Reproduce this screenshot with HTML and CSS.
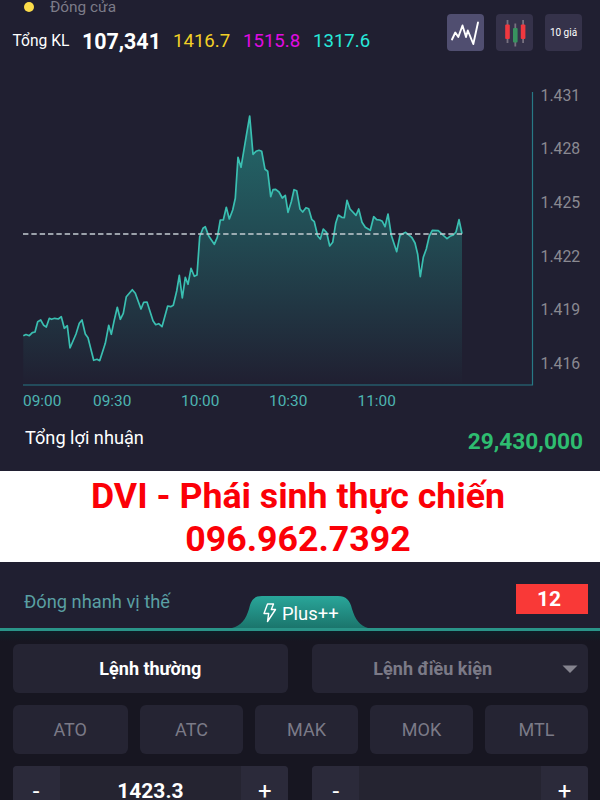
FILE: index.html
```
<!DOCTYPE html>
<html lang="vi">
<head>
  <meta charset="UTF-8" />
  <title>Phái sinh</title>
  <link rel="stylesheet" href="styles.css">
</head>
<body>

<header>
  <div class="market">
    <div class="status"><span class="dot"></span>Đóng cửa</div>
    <div class="stats">
      <span class="label">Tổng KL</span>
      <span class="volume">107,341</span>
      <span class="ref">1416.7</span>
      <span class="ceil">1515.8</span>
      <span class="floor">1317.6</span>
    </div>
  </div>
  <div class="tools">
    <button class="tool active" aria-label="Line chart">
      <svg width="37" height="37" viewBox="0 0 37 37">
        <path d="M5 25.500L8.300 18.500L11.300 23L15.500 11.500L19 23L20.800 16.500L26.300 30L31 8.500" fill="none" stroke="#fff" stroke-width="1.900" stroke-linejoin="round" stroke-linecap="round"/>
      </svg>
    </button>
    <button class="tool" aria-label="Candle chart">
      <svg width="37" height="37" viewBox="0 0 37 37">
        <path d="M11.500 6V29M19.300 9.500V32.500M27.100 6V29" stroke="#77717f" stroke-width="1.800"/>
        <rect x="9.200" y="10.500" width="4.600" height="14.500" rx="1" fill="#f0383f"/>
        <rect x="17" y="14" width="4.600" height="14.500" rx="1" fill="#38935f"/>
        <rect x="24.800" y="10.500" width="4.600" height="14.500" rx="1" fill="#f0383f"/>
      </svg>
    </button>
    <button class="tool">10 giá</button>
  </div>
</header>

<svg class="chart" width="600" height="340" viewBox="0 80 600 340">
  <defs>
    <linearGradient id="area" gradientUnits="userSpaceOnUse" x1="0" y1="116" x2="0" y2="385">
      <stop offset="0" stop-color="#26a69a" stop-opacity="0.55"/>
      <stop offset="0.45" stop-color="#26a69a" stop-opacity="0.32"/>
      <stop offset="1" stop-color="#26a69a" stop-opacity="0"/>
    </linearGradient>
  </defs>
  <path id="areaPath" fill="url(#area)"/>
  <path d="M23 385H532.500V92" fill="none" stroke="#277985" stroke-width="1.200"/>
  <path id="linePath" fill="none" stroke="#3abfb1" stroke-width="1.700" stroke-linejoin="round"/>
  <path d="M23 234H462" stroke="#c3cdd2" stroke-width="1.300" stroke-dasharray="5.400 2.940"/>
  <g class="price">
    <text x="540.500" y="101">1.431</text>
    <text x="540.500" y="154">1.428</text>
    <text x="540.500" y="208">1.425</text>
    <text x="540.500" y="262">1.422</text>
    <text x="540.500" y="315">1.419</text>
    <text x="540.500" y="369">1.416</text>
  </g>
  <g class="time">
    <text x="23" y="406">09:00</text>
    <text x="93" y="406">09:30</text>
    <text x="181" y="406">10:00</text>
    <text x="269" y="406">10:30</text>
    <text x="357.500" y="406">11:00</text>
  </g>
</svg>

<div class="profit">
  <span>Tổng lợi nhuận</span>
  <strong>29,430,000</strong>
</div>

<div class="banner">
  <p>DVI - Phái sinh thực chiến</p>
  <p>096.962.7392</p>
</div>

<div class="quick">
  <span>Đóng nhanh vị thế</span>
  <span class="count">12</span>
  <div class="plus">
    <svg width="136" height="33" viewBox="0 0 136 33">
      <defs>
        <linearGradient id="tab" x1="0" y1="0" x2="0" y2="1">
          <stop offset="0" stop-color="#29a69a"/>
          <stop offset="1" stop-color="#1b756c"/>
        </linearGradient>
      </defs>
      <path d="M0 33C9 31 14 24 17 14C19 5 22 1 30 1H106C114 1 118 5 120 14C123 24 128 31 136 33Z" fill="url(#tab)"/>
      <path d="M35.500 9H41.500L39.300 14.500H43.500L35.500 26.500L36.700 18.500H32Z" fill="none" stroke="#fff" stroke-width="1.400" stroke-linejoin="round"/>
    </svg>
    <span>Plus++</span>
  </div>
</div>

<main class="order">
  <div class="types">
    <button class="box selected">Lệnh thường</button>
    <button class="box conditional">Lệnh điều kiện
      <svg width="16" height="8" viewBox="0 0 16 8"><path d="M0.500 0.500H15.500L8 8Z" fill="#85848f"/></svg>
    </button>
  </div>
  <div class="kinds">
    <button class="box">ATO</button>
    <button class="box">ATC</button>
    <button class="box">MAK</button>
    <button class="box">MOK</button>
    <button class="box">MTL</button>
  </div>
  <div class="steppers">
    <div class="stepper"><button>-</button><span>1423.3</span><button>+</button></div>
    <div class="stepper"><button>-</button><span></span><button>+</button></div>
  </div>
</main>

<script>
  const points = [
    [23.3,335.7],[26,334.5],[29.3,335.7],[32.3,332.6],[35,332],[37.7,321.7],[40.7,320],[43.7,325.3],
    [46.3,327],[49.3,318.3],[51.5,319.3],[54.7,318.3],[58.3,319],[61.3,316.7],[64.3,328.3],[67.3,325.7],
    [70,348],[76,334],[79.3,323.3],[82,320],[85.3,334],[88,337.7],[93.7,360.3],[97,359.3],
    [99.7,360.7],[105.3,343.3],[108.7,325.3],[111.3,334.3],[114.3,320],[117.3,307.3],[120.3,319.3],[123.3,313.3],
    [126.3,296.7],[132.3,289.7],[135.3,293.3],[141,309],[143.7,302.3],[147,302],[153,320.7],[155.7,324.7],
    [158.7,323.7],[162,326.7],[167.7,306],[170.7,306.7],[173.3,305.3],[176.7,291],[179.3,275.3],[182.3,298],
    [185.3,277.3],[188,284.3],[191,268.3],[194.3,276.3],[197,275],[199.7,236.7],[200.7,234],[203,228.3],
    [205.3,226.7],[208.7,236],[214.3,244.3],[217.3,237.3],[220.3,220],[223.3,220],[226.3,207.3],[229.3,219],
    [232.7,210],[235.3,198.3],[238,157.3],[241,167.3],[246.7,133.3],[249.7,116],[253,154.3],[256,151.3],
    [259,150.3],[261.7,151.3],[265,169.3],[267.7,171.3],[270.7,196.7],[273,189.7],[275.7,189.3],[279,192],
    [282.3,198],[285.3,195.3],[288,212.3],[291.3,201.7],[294,189.7],[296.7,190.7],[300,209],[302.7,212],
    [306,207.7],[308.7,208.7],[311.7,219.3],[314.3,221.7],[317.7,236],[320.3,239],[323.3,229],[326.7,232.7],
    [329.7,246],[332.7,242.3],[335.7,223.3],[338.3,215],[341.7,217.3],[344.3,217.7],[347,200.3],[350,209],
    [356,215.3],[358.7,209],[362,222.3],[365.3,227.3],[370.3,230.3],[373.7,216.7],[376.7,219.7],[379.7,220],
    [382.3,221.3],[385,226.7],[388,214],[391.3,235.3],[396.7,251.7],[400,235.3],[405.7,232.3],[411.7,237.3],
    [415,243],[417.7,254.3],[420.3,276.7],[423.3,257.3],[426.3,249],[429.3,236],[432.3,230.3],[438.3,230.7],
    [444,236],[447,238.7],[450,236.3],[453.3,235],[456,232],[459,219.7],[462,233.7]
  ];
  const line = 'M' + points.map(p => p.join(' ')).join('L');
  document.getElementById('linePath').setAttribute('d', line);
  document.getElementById('areaPath').setAttribute('d', line + 'V385H23.3Z');
</script>

</body>
</html>
```
FILE: styles.css
```
* {
  box-sizing: border-box;
}
body {
  margin: 0;
  width: 600px;
  height: 800px;
  overflow: hidden;
  background: #201f31;
  color: #fff;
  font-family: Roboto, sans-serif;
}
button {
  font-family: inherit;
  border: none;
  padding: 0;
  margin: 0;
  color: inherit;
}
svg {
  display: block;
}
header {
  display: flex;
  justify-content: space-between;
  height: 80px;
  padding-right: 18px;
}
.status {
  display: flex;
  align-items: center;
  height: 13px;
  padding-left: 24px;
  font-size: 15.4px;
  color: #7c7b88;
}
.dot {
  width: 10px;
  height: 10px;
  margin-right: 16px;
  border-radius: 50%;
  background: #fbdc4a;
}
.stats {
  display: flex;
  align-items: center;
  height: 28px;
  margin-top: 14px;
  padding-left: 12.5px;
  font-size: 18.6px;
}
.stats .label {
  width: 69.5px;
  font-size: 15.6px;
}
.stats .volume {
  width: 91px;
  font-size: 21.4px;
  font-weight: 700;
}
.ref {
  width: 70px;
  color: #f2d026;
}
.ceil {
  width: 70px;
  color: #e10be3;
}
.floor {
  color: #27e8da;
}
.tools {
  display: flex;
  gap: 12px;
  padding-top: 13.5px;
}
.tool {
  width: 37px;
  height: 37px;
  border-radius: 4px;
  background: #35324a;
  font-size: 10px;
  font-weight: 400;
}
.tool.active {
  background: #504e70;
}
.chart text {
  font-size: 15.8px;
}
.chart .time text {
  font-size: 15.4px;
}
.price {
  fill: #8a8991;
}
.time {
  fill: #4db5b1;
}
.profit {
  display: flex;
  justify-content: space-between;
  height: 51px;
  padding: 6px 17px 0 25px;
  font-size: 18.2px;
  line-height: 24px;
}
.profit strong {
  padding-top: 4px;
  font-size: 22.7px;
  font-weight: 700;
  color: #2ebd70;
}
.banner {
  height: 91px;
  padding: 4px 4px 0 0;
  background: #fff;
  color: #fb0007;
  text-align: center;
  font-size: 35.7px;
  font-weight: 700;
  line-height: 43px;
}
.banner p {
  margin: 0;
}
.quick {
  position: relative;
  display: flex;
  justify-content: space-between;
  height: 69px;
  padding: 22px 12px 0 24px;
  border-bottom: 3px solid #2a9488;
  font-size: 18.3px;
  line-height: 35px;
  color: #5a9fa3;
}
.count {
  width: 72px;
  height: 30px;
  padding-right: 6px;
  background: #f93937;
  color: #fff;
  text-align: center;
  font-size: 21px;
  font-weight: 700;
  line-height: 30px;
}
.plus {
  position: absolute;
  left: 232px;
  bottom: 0;
}
.plus span {
  position: absolute;
  left: 50px;
  top: 1px;
  color: #fff;
  font-size: 18.4px;
}
.order {
  height: 169px;
  padding: 13px 12px 0 12.5px;
  background: linear-gradient(#0e1f27, #171621 10px);
}
.types, .steppers {
  display: grid;
  grid-template-columns: 1fr 1fr;
  gap: 24px;
}
.kinds {
  display: grid;
  grid-template-columns: 115.5px repeat(4, 1fr);
  gap: 12px;
  margin: 12px 0;
}
.box {
  height: 49px;
  border-radius: 6px;
  background: #252433;
  color: #7b7a87;
  font-size: 18px;
}
.selected, .conditional {
  font-weight: 700;
}
.selected {
  color: #fff;
}
.conditional {
  display: flex;
  align-items: center;
  justify-content: flex-end;
  padding-right: 10px;
  gap: 70px;
}
.stepper {
  display: grid;
  grid-template-columns: 47px 1fr 47px;
  height: 49px;
  border-radius: 4px;
  overflow: hidden;
  background: #252431;
  text-align: center;
  font-size: 21px;
  font-weight: 700;
  line-height: 50px;
}
.stepper button {
  background: #2b2a3a;
  font-size: 24px;
}
```
